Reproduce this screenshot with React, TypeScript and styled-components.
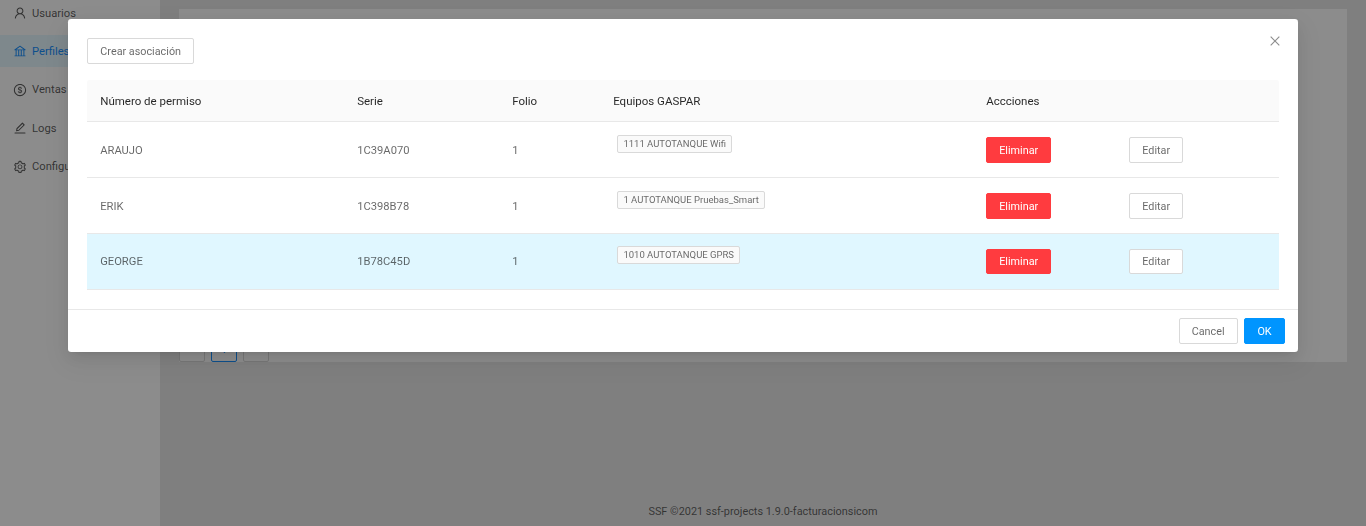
import React from "react";
import styled, { createGlobalStyle } from "styled-components";
import { AiOutlineUser, AiOutlineBank, AiOutlineDollarCircle, AiOutlineEdit, AiOutlineSetting, AiOutlineClose } from "react-icons/ai";

const Global = createGlobalStyle`
  html, body { margin: 0; padding: 0; height: 100%; overflow: hidden; }
  body { font-family: Roboto, "Noto Sans", sans-serif; font-size: 11.2px; color: rgba(0,0,0,.6); background: #e8e8e8; }
  * { box-sizing: border-box; }
`;

const Page = styled.div`display: flex; height: 526px; overflow: hidden;`;
const Sidebar = styled.aside`width: 160px; flex: none; background: #fff;`;
const Menu = styled.ul`list-style: none; margin: -3px 0 0; padding: 0;`;
const MenuItem = styled.li<{ $active?: boolean }>`
  height: 32px; margin-bottom: 6.4px; display: flex; align-items: center; gap: 5.5px; padding-left: 12.5px;
  background: ${(p) => (p.$active ? "#e6f7ff" : "transparent")};
  color: ${(p) => (p.$active ? "#1890ff" : "rgba(0,0,0,.65)")};
  svg { font-size: 14px; flex: none; }
`;
const Main = styled.main`flex: 1; min-width: 0; display: flex; flex-direction: column; padding: 9px 19px 0;`;
const Card = styled.section`height: 353px; background: #fff; padding: 327px 0 0 0.2px; flex: none;`;
const Pager = styled.div`display: flex; gap: 6.4px;`;
const PageBox = styled.div<{ $active?: boolean }>`
  width: 25.6px; height: 25.6px; border: 1px solid ${(p) => (p.$active ? "#1890ff" : "#d9d9d9")}; border-radius: 2px; background: #fff;
  display: flex; align-items: center; justify-content: center; font-size: 12px;
  color: ${(p) => (p.$active ? "#1890ff" : "rgba(0,0,0,.65)")};
`;
const PageFooter = styled.footer`margin-top: auto; height: 22px; text-align: center; font-size: 10.9px; line-height: 16px;`;

const Overlay = styled.div`position: fixed; inset: 0; background: rgba(0,0,0,.45);`;
const Modal = styled.div`
  position: fixed; left: 68px; top: 19px; width: 1230px; height: 332.6px; background: #fff; border-radius: 3.2px;
  box-shadow: 0 3px 6px -4px rgba(0,0,0,.12), 0 6px 16px rgba(0,0,0,.08), 0 9px 28px 8px rgba(0,0,0,.05);
  display: flex; flex-direction: column;
`;
const Close = styled.span`
  position: absolute; top: 15px; right: 16px; font-size: 14px; color: rgba(0,0,0,.45); display: flex;
`;
const ModalBody = styled.div`padding: 19.2px; flex: 1;`;
const Btn = styled.button<{ $w?: number; $kind?: "danger" | "primary" }>`
  height: 25.6px; padding: 1px 0 0; margin: 0; font: inherit; font-size: 10.8px; border-radius: 2px; cursor: pointer;
  width: ${(p) => (p.$w ? `${p.$w}px` : "auto")};
  color: ${(p) => (p.$kind ? "#fff" : "rgba(0,0,0,.6)")};
  background: ${(p) => (p.$kind === "danger" ? "#ff3b3f" : p.$kind === "primary" ? "#0095ff" : "#fff")};
  border: 1px solid ${(p) => (p.$kind === "danger" ? "#ff3b3f" : p.$kind === "primary" ? "#0095ff" : "#d9d9d9")};
`;
const Table = styled.div`margin-top: 16px;`;
const Row = styled.div<{ $head?: boolean; $hl?: boolean }>`
  display: grid; grid-template-columns: 257px 155px 101px 373px 143px 1fr; align-items: center;
  height: ${(p) => (p.$head ? "42px" : "56px")};
  padding-bottom: ${(p) => (p.$hl ? "0.8px" : "0")};
  background: ${(p) => (p.$head ? "#fafafa" : p.$hl ? "#e0f7ff" : "#fff")};
  border-bottom: 1px solid #e8e8e8;
  color: ${(p) => (p.$head ? "rgba(0,0,0,.85)" : "rgba(0,0,0,.6)")};
  font-size: ${(p) => (p.$head ? "11.5px" : "11.2px")};
  border-radius: ${(p) => (p.$head ? "3px 3px 0 0" : "0")};
`;
const Cell = styled.div`padding: 1px 13px 0;`;
const TextCell = styled(Cell)`padding-top: 2px;`;
const Tag = styled.span`
  display: inline-block; height: 18px; line-height: 16px; margin: 0 0 12px 4px; padding: 0 5.2px; font-size: 9.5px; white-space: nowrap;
  background: #fafafa; border: 1px solid #d9d9d9; border-radius: 2px; vertical-align: top;
`;
const ModalFooter = styled.div`
  border-top: 1px solid #e8e8e8; padding: 8px 13px; display: flex; justify-content: flex-end; gap: 6.4px;
`;

const rows = [
  { name: "ARAUJO", serie: "1C39A070", tag: "1111 AUTOTANQUE Wifi" },
  { name: "ERIK", serie: "1C398B78", tag: "1 AUTOTANQUE Pruebas_Smart" },
  { name: "GEORGE", serie: "1B78C45D", tag: "1010 AUTOTANQUE GPRS", hl: true },
];

export default function App() {
  return (
    <>
      <Global />
      <Page>
        <Sidebar>
          <Menu>
            <MenuItem><AiOutlineUser />Usuarios</MenuItem>
            <MenuItem $active><AiOutlineBank />Perfiles</MenuItem>
            <MenuItem><AiOutlineDollarCircle />Ventas</MenuItem>
            <MenuItem><AiOutlineEdit />Logs</MenuItem>
            <MenuItem><AiOutlineSetting />Configuración</MenuItem>
          </Menu>
        </Sidebar>
        <Main>
          <Card>
            <Pager>
              <PageBox>‹</PageBox>
              <PageBox $active>1</PageBox>
              <PageBox>›</PageBox>
            </Pager>
          </Card>
          <PageFooter>SSF ©2021 ssf-projects 1.9.0-facturacionsicom</PageFooter>
        </Main>
      </Page>
      <Overlay />
      <Modal>
        <Close><AiOutlineClose /></Close>
        <ModalBody>
          <Btn $w={107}>Crear asociación</Btn>
          <Table>
            <Row $head>
              <TextCell>Número de permiso</TextCell>
              <TextCell>Serie</TextCell>
              <TextCell>Folio</TextCell>
              <TextCell>Equipos GASPAR</TextCell>
              <TextCell>Accciones</TextCell>
              <TextCell />
            </Row>
            {rows.map((r) => (
              <Row key={r.name} $hl={r.hl}>
                <TextCell>{r.name}</TextCell>
                <TextCell>{r.serie}</TextCell>
                <TextCell>1</TextCell>
                <Cell><Tag>{r.tag}</Tag></Cell>
                <Cell><Btn $w={65} $kind="danger">Eliminar</Btn></Cell>
                <Cell><Btn $w={54}>Editar</Btn></Cell>
              </Row>
            ))}
          </Table>
        </ModalBody>
        <ModalFooter>
          <Btn $w={59}>Cancel</Btn>
          <Btn $w={41} $kind="primary">OK</Btn>
        </ModalFooter>
      </Modal>
    </>
  );
}
